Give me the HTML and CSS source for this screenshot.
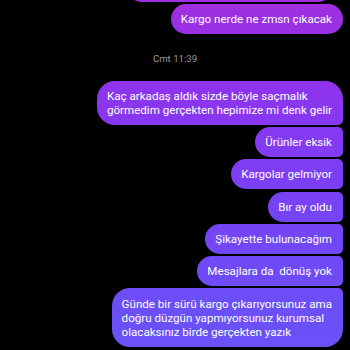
FILE: index.html
```html
<!DOCTYPE html>
<html lang="tr">
  <head>
    <meta charset="UTF-8" />
    <meta name="viewport" content="width=device-width, initial-scale=1.0" />
    <title>Mesajlar</title>
    <link rel="stylesheet" href="styles.css">
  </head>
  <body>
    <div class="chat">
      <div class="msg peek"></div>
      <div class="msg solo">Kargo nerde ne zmsn çıkacak</div>

      <div class="time">Cmt 11:39</div>

      <div class="msg first wide">Kaç arkadaş aldık sizde böyle saçmalık<br>görmedim gerçekten hepimize mi denk gelir</div>
      <div class="msg mid">Ürünler eksik</div>
      <div class="msg mid">Kargolar gelmiyor</div>
      <div class="msg mid">Bır ay oldu</div>
      <div class="msg mid">Şikayette bulunacağım</div>
      <div class="msg mid">Mesajlara da&nbsp; dönüş yok</div>
      <div class="msg last wide">Günde bir sürü kargo çıkarıyorsunuz ama<br>doğru düzgün yapmıyorsunuz kurumsal<br>olacaksınız birde gerçekten yazık</div>
    </div>
  </body>
</html>
```

FILE: styles.css
```css
body {
  margin: 0;
  background-color: #000;
  font-family: Roboto, "Noto Sans", sans-serif;
  overflow: hidden;
}
.chat {
  display: flex;
  flex-direction: column;
  align-items: flex-end;
  gap: 2.2px;
  padding-right: 7px;
  margin-top: -28.5px;
}
.msg {
  box-sizing: border-box;
  height: 30px;
  padding: 0 11px 0 10px;
  line-height: 30px;
  font-size: 11.6px;
  color: #fff;
  background: linear-gradient(to bottom, #a02ee0 0px, #8b35ee 100px, #7444f6 220px, #6853f7 350px) fixed;
  border-radius: 15px 5px 5px 15px;
  white-space: nowrap;
}
.peek {
  width: 206px;
  margin-right: 10px;
  border-radius: 15px;
}
.solo {
  border-radius: 15px;
}
.first {
  border-radius: 18px 18px 5px 18px;
}
.wide {
  height: auto;
  line-height: 14px;
  padding: 8px 11px 8px 10px;
}
.last {
  padding: 8.5px 11px 8.5px 10px;
  border-radius: 18px 5px 18px 18px;
}
.time {
  align-self: center;
  margin: 16px 0 13px 7px;
  font-size: 9.6px;
  line-height: 14px;
  color: #9a9a9a;
}
```
